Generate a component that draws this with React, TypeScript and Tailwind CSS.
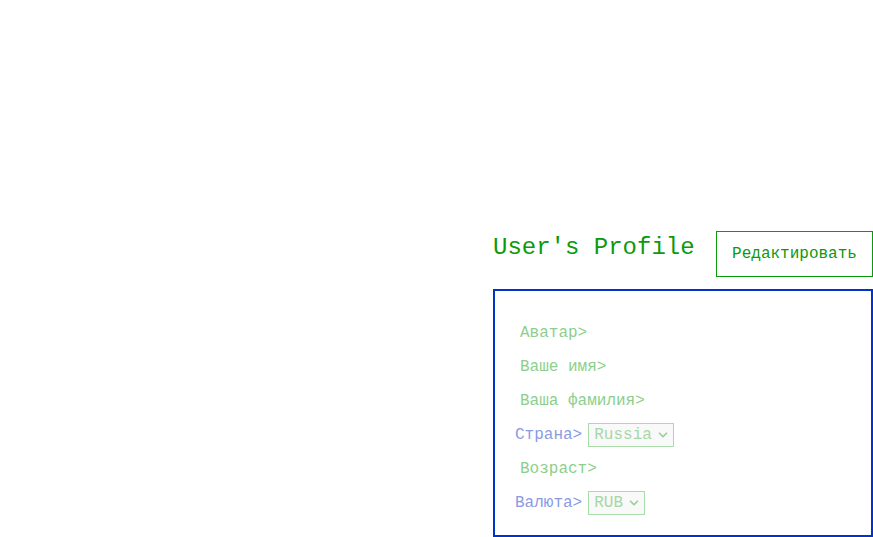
import { ChevronDown } from 'lucide-react';

const mono = { fontFamily: '"Liberation Mono", "DejaVu Sans Mono", monospace' };

function Field({ label }: { label: string }) {
  return (
    <div className="h-[34px] flex items-center pl-[25px] text-[16px] text-[#8ccf8c]">
      {label}
    </div>
  );
}

function SelectField({ label, value, width }: { label: string; value: string; width: string }) {
  return (
    <div className="h-[34px] flex items-center pl-[20px] text-[16px]">
      <span className="text-[#8a9be3]">{label}</span>
      <div
        className={`ml-[6px] h-[24px] ${width} flex items-center justify-between pl-[5px] pr-[3px] border border-[#a9dca9] bg-[#f9f9f9] text-[#a6d8a6]`}
      >
        <span>{value}</span>
        <ChevronDown className="w-[14px] h-[14px] text-[#99d199]" strokeWidth={3} />
      </div>
    </div>
  );
}

export default function App() {
  return (
    <div className="w-full h-[537px] bg-white flex justify-end overflow-hidden" style={mono}>
      <div className="w-[380px] pt-[231px] flex flex-col">
        <div className="flex items-start justify-between h-[58px]">
          <h1 className="text-[24px] leading-[30px] text-[#0c9a0c] mt-[2px]">User's Profile</h1>
          <button className="w-[157px] h-[46px] border border-[#0c9a0c] text-[#0c9a0c] text-[16px]">
            Редактировать
          </button>
        </div>
        <div className="flex-1 border-2 border-[#0033cc] pt-[25px]">
          <Field label="Аватар>" />
          <Field label="Ваше имя>" />
          <Field label="Ваша фамилия>" />
          <SelectField label="Страна>" value="Russia" width="w-[86px]" />
          <Field label="Возраст>" />
          <SelectField label="Валюта>" value="RUB" width="w-[57px]" />
        </div>
      </div>
    </div>
  );
}
